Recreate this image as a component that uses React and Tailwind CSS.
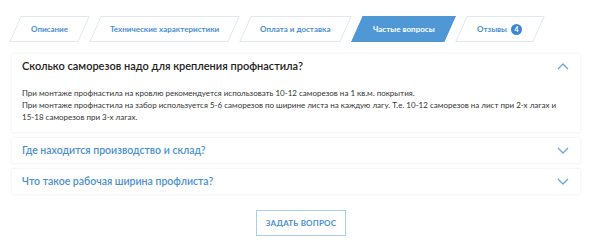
import React from "react";

const tabs = [
  { label: "Описание", w: "w-[69px]" },
  { label: "Технические характеристики", w: "w-[139px]" },
  { label: "Оплата и доставка", w: "w-[101px]" },
  { label: "Частые вопросы", w: "w-[93px]", active: true },
  { label: "Отзывы", w: "w-[78px]", badge: "4" },
];

function Chevron({ up }) {
  return (
    <svg width="12" height="7" viewBox="0 0 12 7" className="shrink-0">
      <path
        d={up ? "M1 6 L6 1 L11 6" : "M1 1 L6 6 L11 1"}
        fill="none"
        stroke="#6aa6dd"
        strokeWidth="1.3"
      />
    </svg>
  );
}

export default function App() {
  return (
    <div
      className="w-[600px] h-[249px] bg-white overflow-hidden"
      style={{ fontFamily: "Lato, 'Noto Sans', sans-serif" }}
    >
      <div className="flex gap-[11px] pl-[15px] pt-[16px]">
        {tabs.map((t) => (
          <div
            key={t.label}
            className={`${t.w} h-[26px] -skew-x-[24deg] flex items-center justify-center border ${
              t.active
                ? "bg-[#4f97d5] border-[#4f97d5]"
                : "bg-white border-[#e2e8f0]"
            }`}
          >
            <div className="skew-x-[24deg] flex items-center gap-[4px]">
              <span
                className={`text-[8px] font-bold whitespace-nowrap ${
                  t.active ? "text-white" : "text-[#4a8fd1]"
                }`}
              >
                {t.label}
              </span>
              {t.badge && (
                <span className="w-[11px] h-[11px] rounded-full bg-[#3f87cc] text-white text-[7px] font-bold flex items-center justify-center">
                  {t.badge}
                </span>
              )}
            </div>
          </div>
        ))}
      </div>

      <div className="ml-[12px] w-[568px] mt-[12px] flex flex-col gap-[6px]">
        <div className="bg-white shadow-[0_0_3px_rgba(0,0,0,0.09)] pl-[10px] pr-[10px] pt-[1px] pb-[9px]">
          <div className="flex items-center justify-between h-[22px]">
            <span className="text-[11px] font-semibold text-[#222]">
              Сколько саморезов надо для крепления профнастила?
            </span>
            <span className="mr-[1px]">
              <Chevron up />
            </span>
          </div>
          <div className="mt-[11px] text-[8px] leading-[11.8px] text-[#333]">
            <p>
              При монтаже профнастила на кровлю рекомендуется использовать 10-12
              саморезов на 1 кв.м. покрытия.
            </p>
            <p>
              При монтаже профнастила на забор используется 5-6 саморезов по
              ширине листа на каждую лагу. Т.е. 10-12 саморезов на лист при 2-х
              лагах и
              <br />
              15-18 саморезов при 3-х лагах.
            </p>
          </div>
        </div>

        {["Где находится производство и склад?", "Что такое рабочая ширина профлиста?"].map(
          (q) => (
            <div
              key={q}
              className="bg-white shadow-[0_0_3px_rgba(0,0,0,0.09)] pl-[10px] pr-[10px] h-[25px] flex items-center justify-between"
            >
              <span className="text-[10.5px] font-semibold text-[#4a8fd1]">{q}</span>
              <span className="mr-[1px]">
                <Chevron />
              </span>
            </div>
          )
        )}
      </div>

      <div className="flex justify-center mt-[16px] pl-[2px]">
        <button className="w-[90px] h-[26px] border border-[#a8cdee] bg-white text-[8px] font-bold text-[#4a8fd1] tracking-[0.2px]">
          ЗАДАТЬ ВОПРОС
        </button>
      </div>
    </div>
  );
}
